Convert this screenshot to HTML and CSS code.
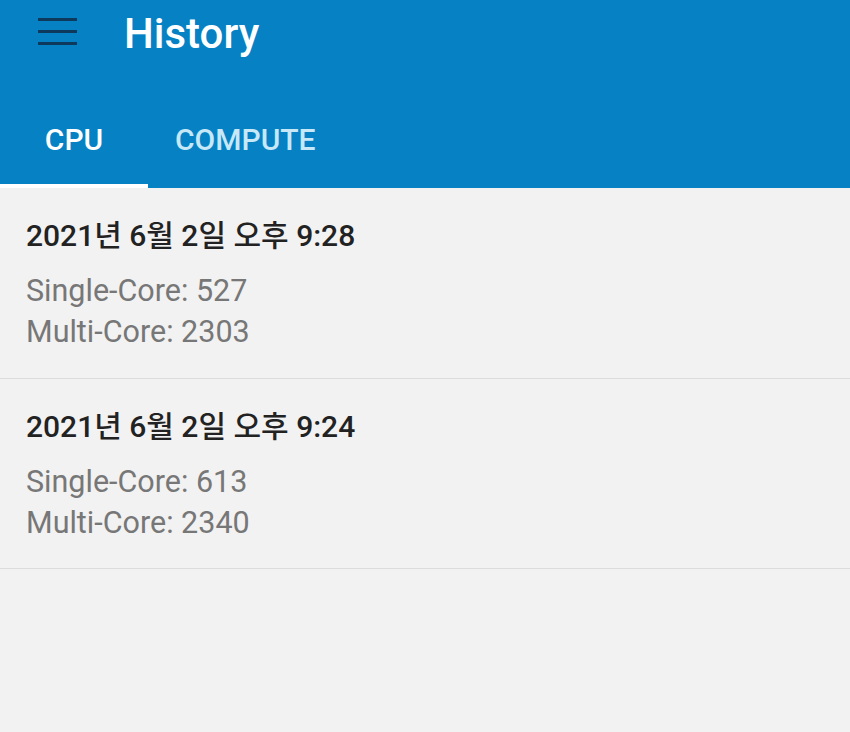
FILE: index.html
```html
<!DOCTYPE html>
<html>
<head>
	<meta charset="UTF-8">
	<title>History</title>
	<link rel="stylesheet" href="styles.css">
</head>
<body>
	<div class="header">
		<div class="toolbar">
			<div class="menu">
				<span></span>
				<span></span>
				<span></span>
			</div>
			<h1 class="title">History</h1>
		</div>
		<ul class="tabs">
			<li class="active">CPU</li>
			<li>COMPUTE</li>
		</ul>
	</div>

	<div class="list">
		<div class="item">
			<p class="date">2021년 6월 2일 오후 9:28</p>
			<p class="score">Single-Core: 527</p>
			<p class="score">Multi-Core: 2303</p>
		</div>
		<div class="item">
			<p class="date">2021년 6월 2일 오후 9:24</p>
			<p class="score">Single-Core: 613</p>
			<p class="score">Multi-Core: 2340</p>
		</div>
	</div>
</body>
</html>
```

FILE: styles.css
```css
	*{
		padding: 0;
		margin: 0;
	}
	body{
		background: #f2f2f2;
		font-family: Roboto, "Noto Sans CJK KR", sans-serif;
		height: 732px;
		overflow: hidden;
	}
	ul,li{
		list-style: none;
	}
	.header{
		background: #0581c4;
		height: 188px;
		display: flex;
		flex-direction: column;
	}
	.toolbar{
		height: 84px;
		display: flex;
		align-items: center;
		padding-left: 38px;
		padding-bottom: 16px;
		box-sizing: border-box;
	}
	.menu{
		width: 39px;
		display: flex;
		flex-direction: column;
		gap: 9px;
		margin-bottom: 6px;
	}
	.menu span{
		display: block;
		height: 3px;
		background: #0d3a5c;
	}
	.title{
		margin-left: 47px;
		color: #fff;
		font-size: 42px;
		font-weight: 500;
		line-height: 50px;
	}
	.tabs{
		flex: 1;
		display: flex;
	}
	.tabs li{
		display: flex;
		align-items: center;
		justify-content: center;
		padding: 10px 27px 0;
		font-size: 30px;
		font-weight: 500;
		color: #c7e8f7;
		border-bottom: 4px solid transparent;
	}
	.tabs li:first-child{
		width: 148px;
		box-sizing: border-box;
	}
	.tabs .active{
		color: #fff;
		border-bottom-color: #fff;
	}
	.item{
		height: 191px;
		border-bottom: 1px solid #dcdcdc;
		padding: 30px 26px 0;
		box-sizing: border-box;
	}
	.date{
		font-size: 30px;
		font-weight: 500;
		color: #222;
		line-height: 36px;
		margin-bottom: 16px;
	}
	.score{
		font-size: 30.5px;
		color: #777;
		line-height: 41px;
	}
	.item + .item{
		height: 190px;
	}
```
